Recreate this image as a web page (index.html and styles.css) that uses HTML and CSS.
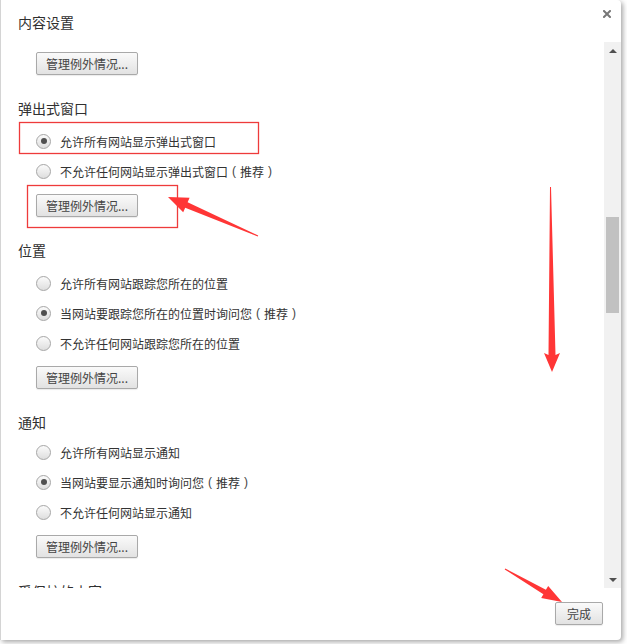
FILE: index.html
```html
<!DOCTYPE html>
<html lang="zh-CN">
<head>
<meta charset="utf-8">
<title>内容设置</title>
<link rel="stylesheet" href="styles.css">
</head>
<body>
<div class="dialog">
  <div class="header">
    <h1 class="title">内容设置</h1>
    <svg class="close" width="8" height="8" viewBox="0 0 8 8"><path d="M1 1 L7 7 M7 1 L1 7" stroke="#777" stroke-width="2" stroke-linecap="square"/></svg>
  </div>
  <div class="main">
    <div class="content">
      <button class="btn btn-manage first">管理例外情况...</button>

      <section class="section">
        <h2 class="heading">弹出式窗口</h2>
        <div class="options">
          <label class="option"><span class="radio checked"></span>允许所有网站显示弹出式窗口</label>
          <label class="option"><span class="radio"></span>不允许任何网站显示弹出式窗口<span class="paren">(</span>推荐<span class="paren">)</span></label>
        </div>
        <button class="btn btn-manage">管理例外情况...</button>
      </section>

      <section class="section">
        <h2 class="heading">位置</h2>
        <div class="options">
          <label class="option"><span class="radio"></span>允许所有网站跟踪您所在的位置</label>
          <label class="option"><span class="radio checked"></span>当网站要跟踪您所在的位置时询问您<span class="paren">(</span>推荐<span class="paren">)</span></label>
          <label class="option"><span class="radio"></span>不允许任何网站跟踪您所在的位置</label>
        </div>
        <button class="btn btn-manage">管理例外情况...</button>
      </section>

      <section class="section">
        <h2 class="heading">通知</h2>
        <div class="options tight">
          <label class="option"><span class="radio"></span>允许所有网站显示通知</label>
          <label class="option"><span class="radio checked"></span>当网站要显示通知时询问您<span class="paren">(</span>推荐<span class="paren">)</span></label>
          <label class="option"><span class="radio"></span>不允许任何网站显示通知</label>
        </div>
        <button class="btn btn-manage">管理例外情况...</button>
      </section>

      <section class="section last">
        <h2 class="heading">受保护的内容</h2>
      </section>
    </div>
    <div class="scrollbar">
      <div class="sb-btn"><span class="tri-up"></span></div>
      <div class="sb-track"><div class="sb-thumb"></div></div>
      <div class="sb-btn"><span class="tri-down"></span></div>
    </div>
  </div>
  <div class="footer">
    <button class="btn btn-done">完成</button>
  </div>
</div>

<svg class="annot" width="627" height="644" viewBox="0 0 627 644">
  <rect x="19.5" y="122.5" width="239" height="31" fill="none" stroke="#ee3b3b" stroke-width="1.3"/>
  <rect x="27.5" y="185.5" width="150" height="42" fill="none" stroke="#ee3b3b" stroke-width="1.3"/>
  <polygon fill="#ff3636" points="168,197 189.6,197.7 187.6,202.2 258.2,235.5 257.8,236.5 185.2,207.8 183.2,212.3"/>
  <polygon fill="#ff3636" points="550,187 551,187 555.5,355 560,353 552,372 544,353 548.5,355"/>
  <polygon fill="#ff3636" points="562,602 548.2,586 545.9,589.8 505.3,568.6 504.7,569.4 543.4,594.2 541.2,598"/>
</svg>
</body>
</html>
```

FILE: styles.css
```css
html, body {
  margin: 0;
  padding: 0;
  background: #ffffff;
}

body {
  width: 627px;
  height: 644px;
  overflow: hidden;
  font-family: "Noto Sans CJK SC", "Noto Sans", sans-serif;
  color: #333;
}

.dialog {
  width: 621px;
  height: 640px;
  box-sizing: border-box;
  background: #fff;
  border-left: 1px solid #d4d4d4;
  border-radius: 0 4px 4px 0;
  box-shadow: 2px 2px 5px rgba(0, 0, 0, 0.35);
  display: flex;
  flex-direction: column;
}

.header {
  height: 42px;
  box-sizing: border-box;
  padding: 12px 10px 0 17px;
  display: flex;
  justify-content: space-between;
  align-items: flex-start;
  flex: none;
}

.title {
  margin: 0;
  font-size: 14px;
  font-weight: normal;
  line-height: 20px;
  color: #303030;
}

.close {
  margin-top: -2px;
}

.main {
  height: 546px;
  display: flex;
  flex: none;
}

.content {
  flex: 1;
  overflow: hidden;
  padding-left: 17px;
}

.btn {
  box-sizing: border-box;
  height: 23px;
  padding: 0;
  border: 1px solid #a9a9a9;
  border-radius: 2px;
  background: linear-gradient(#fafafa, #e2e2e2);
  font-family: "Noto Sans CJK SC", sans-serif;
  font-size: 12px;
  line-height: 20px;
  color: #444;
  display: block;
  box-shadow: 0 1px 1px rgba(0, 0, 0, 0.08);
}

.btn-manage {
  width: 102px;
  margin-left: 18px;
  margin-top: 8px;
}

.btn-manage.first {
  margin-top: 10px;
}

.section {
  margin-top: 23px;
}

.section.last {
  margin-top: 23px;
}

.heading {
  margin: 0;
  font-size: 14px;
  font-weight: normal;
  line-height: 20px;
  color: #303030;
}

.options {
  margin-top: 8px;
}

.options.tight {
  margin-top: 5px;
}

.option {
  height: 30px;
  display: flex;
  align-items: center;
  padding-left: 18px;
  font-size: 12px;
  color: #333;
  white-space: pre;
}

.paren {
  display: inline-block;
  width: 12px;
  text-align: center;
  font-family: "Liberation Sans", sans-serif;
  color: #444;
}

.radio {
  width: 15px;
  height: 15px;
  margin-right: 9px;
  box-sizing: border-box;
  border-radius: 50%;
  border: 1px solid #a6a6a6;
  background: linear-gradient(#fbfbfb, #dedede);
  display: flex;
  align-items: center;
  justify-content: center;
  flex: none;
}

.radio.checked::after {
  content: "";
  width: 6px;
  height: 6px;
  border-radius: 50%;
  background: #505050;
}

.scrollbar {
  width: 17px;
  background: #f1f1f1;
  display: flex;
  flex-direction: column;
  flex: none;
}

.sb-btn {
  height: 17px;
  display: flex;
  align-items: center;
  justify-content: center;
}

.tri-up {
  width: 0;
  height: 0;
  border-left: 4px solid transparent;
  border-right: 4px solid transparent;
  border-bottom: 4px solid #505050;
}

.tri-down {
  width: 0;
  height: 0;
  border-left: 4px solid transparent;
  border-right: 4px solid transparent;
  border-top: 4px solid #505050;
}

.sb-track {
  flex: 1;
  padding: 0 2px;
}

.sb-thumb {
  margin-top: 158px;
  height: 96px;
  background: #c1c1c1;
}

.footer {
  flex: 1;
  display: flex;
  justify-content: flex-end;
  align-items: flex-start;
  padding: 14px 18px 0 0;
}

.btn-done {
  width: 48px;
}

.annot {
  position: absolute;
  left: 0;
  top: 0;
  pointer-events: none;
}
```
